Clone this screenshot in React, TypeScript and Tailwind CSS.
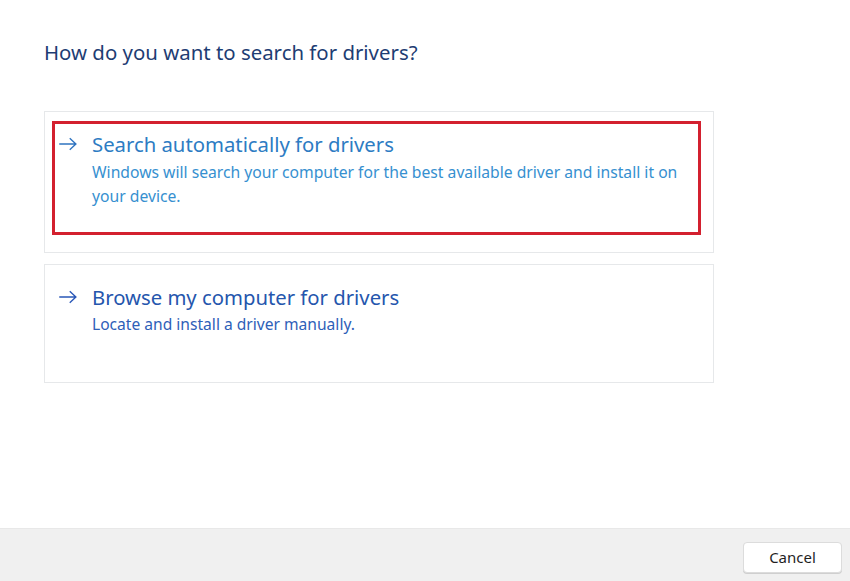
const font = { fontFamily: '"Noto Sans", "Open Sans", sans-serif' };

function Arrow({ className }: { className: string }) {
  return (
    <svg viewBox="0 0 22 16" className={className} fill="none" stroke="currentColor" strokeWidth={1.6}>
      <path d="M1 8h19M13 1.5 20 8l-7 6.5" />
    </svg>
  );
}

export default function App() {
  return (
    <div className="flex h-[581px] w-[850px] flex-col bg-white" style={font}>
      <div className="flex-1 pl-[44px] pt-[38px]">
        <h1 className="text-[20.4px] leading-[28px] text-[#1e3d73]">How do you want to search for drivers?</h1>

        {/* option 1, highlighted */}
        <div className="mt-[45px] h-[142px] w-[670px] border border-[#e6e8ea] pl-[7px] pt-[9px]">
          <div className="h-[114px] w-[649px] border-[3px] border-[#d3202f] pl-[2px] pt-[6px]">
            <div className="flex items-start">
              <Arrow className="mt-[7px] h-[14px] w-[22px] text-[#2f74c0]" />
              <div className="ml-[13px]">
                <div className="text-[20.3px] leading-[28px] text-[#2d7cc3]">Search automatically for drivers</div>
                <div className="mt-[2px] w-[594px] text-[15.7px] leading-[24px] text-[#3690d0]">
                  Windows will search your computer for the best available driver and install it on your device.
                </div>
              </div>
            </div>
          </div>
        </div>

        {/* option 2 */}
        <div className="mt-[11px] h-[119px] w-[670px] border border-[#e6e8ea] pl-[12px] pt-[18px]">
          <div className="flex items-start">
            <Arrow className="mt-[7px] h-[14px] w-[22px] text-[#2a58b8]" />
            <div className="ml-[13px]">
              <div className="text-[20.3px] leading-[28px] text-[#2556ad]">Browse my computer for drivers</div>
              <div className="mt-[1px] text-[15.6px] leading-[24px] text-[#2e60b8]">Locate and install a driver manually.</div>
            </div>
          </div>
        </div>
      </div>

      <div className="flex h-[53px] items-start justify-end border-t border-[#e8e8e8] bg-[#f0f0f0] pr-[8px] pt-[13px]">
        <button className="h-[31px] w-[99px] rounded-[4px] border border-[#dcdcdc] bg-white text-[15px] text-[#1f1f1f] shadow-[0_1px_0_#cfcfcf]">
          Cancel
        </button>
      </div>
    </div>
  );
}
